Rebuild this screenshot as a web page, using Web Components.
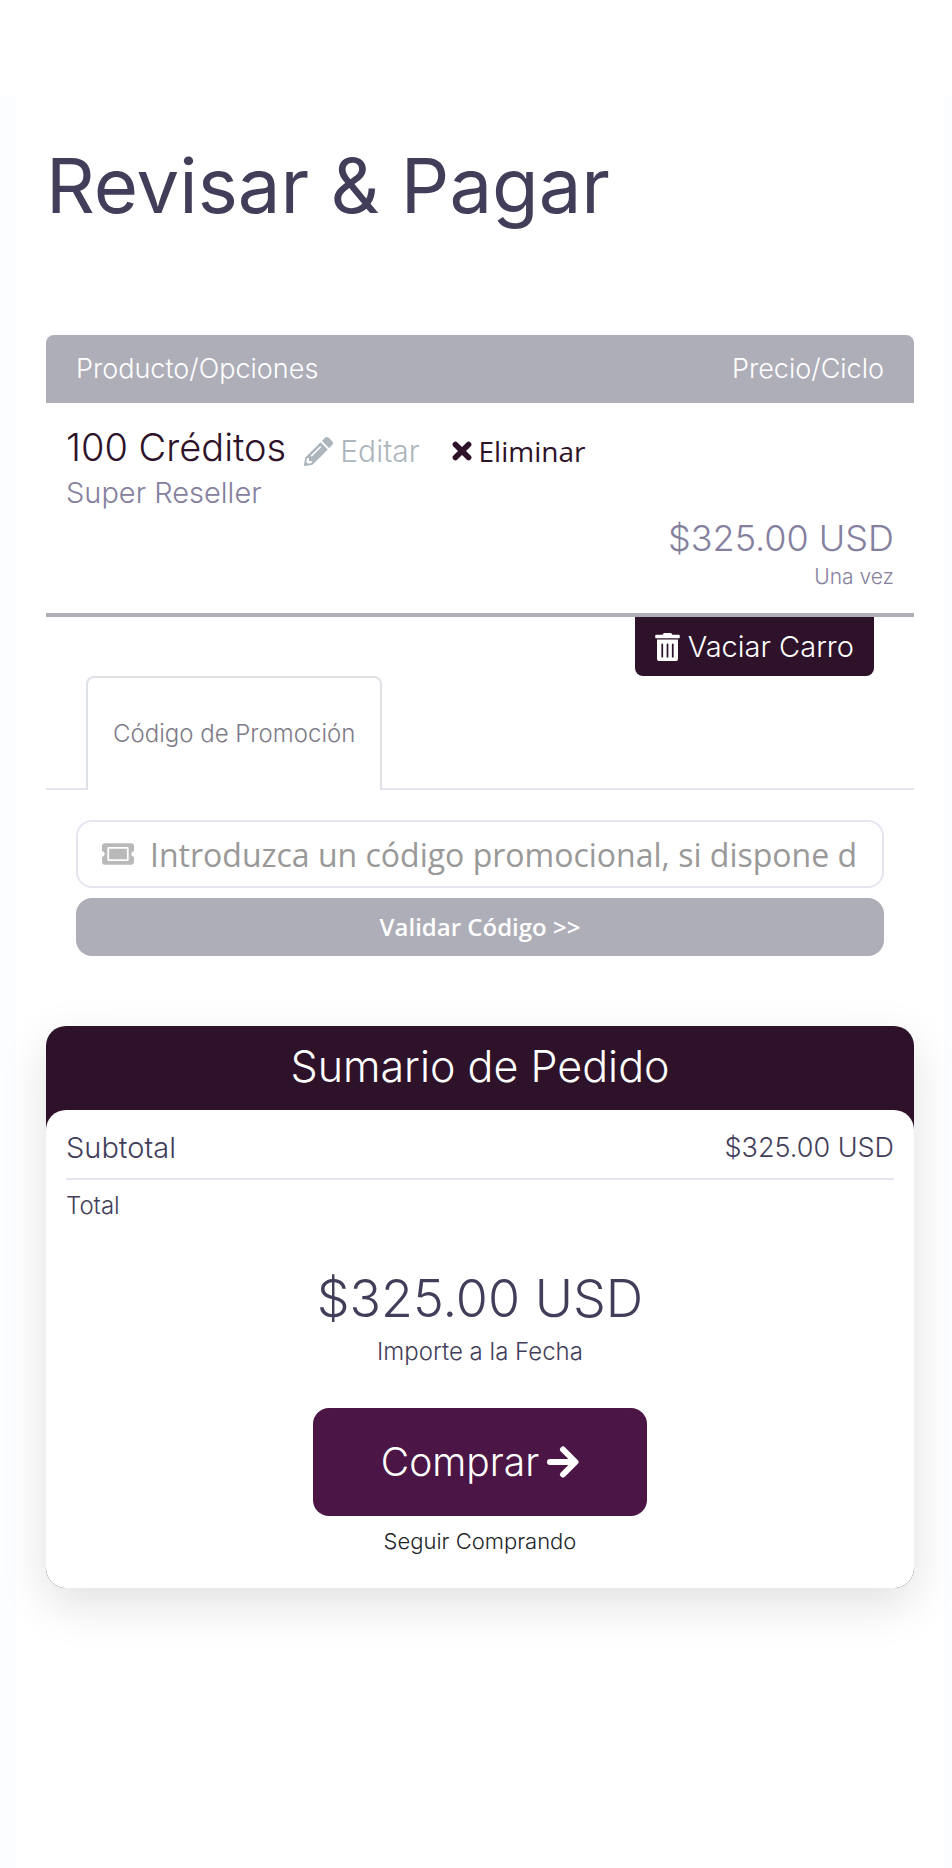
<!DOCTYPE html>
<html lang="es">
<head>
<meta charset="utf-8">
<meta name="viewport" content="width=device-width, initial-scale=1">
<title>Revisar &amp; Pagar</title>
<style>
  :root {
    --ink: #423e5a;
    --muted: #85809e;
    --bar: #aeaeb8;
    --plum: #2d1229;
    --plum-bright: #4b1645;
    --rule: #e6e5f1;
    --alt-font: "Open Sans", "Noto Sans", sans-serif;
  }
  body {
    margin: 0;
    background: #fff;
    color: var(--ink);
    font: 300 24px/30px Inter, "Noto Sans", sans-serif;
  }
</style>
</head>
<body>
<checkout-page>
  <span slot="title">Revisar &amp; Pagar</span>
  <cart-table></cart-table>
  <promo-box></promo-box>
  <order-summary>
    <span slot="title">Sumario de Pedido</span>
    <span slot="subtotal">$325.00 USD</span>
    <span slot="total">$325.00 USD</span>
  </order-summary>
</checkout-page>

<script>
const define = (name, html) => {
  const template = document.createElement('template');
  template.innerHTML = html;
  customElements.define(name, class extends HTMLElement {
    constructor() {
      super();
      this.attachShadow({ mode: 'open' }).append(template.content.cloneNode(true));
    }
  });
};

const ICONS = {
  pencil: ['0 0 512 512', '<path fill="currentColor" d="M497.9 142.1l-46.1 46.1c-4.7 4.7-12.3 4.7-17 0l-111-111c-4.7-4.7-4.7-12.3 0-17l46.1-46.1c18.7-18.7 49.1-18.7 67.9 0l60.1 60.1c18.8 18.7 18.8 49.1 0 67.9zM284.2 99.8L21.6 362.4.4 483.9c-2.9 16.4 11.4 30.6 27.8 27.8l121.5-21.3 262.6-262.6c4.7-4.7 4.7-12.3 0-17l-111-111c-4.8-4.7-12.4-4.7-17.1 0zM124.1 339.9c-5.5-5.5-5.5-14.3 0-19.8l154-154c5.5-5.5 14.3-5.5 19.8 0s5.5 14.3 0 19.8l-154 154c-5.5 5.5-14.3 5.5-19.8 0zM88 424h48v36.3l-64.5 11.3-31.1-31.1L51.7 376H88v48z"/>'],
  cross: ['0 0 20 20', '<path fill="none" stroke="currentColor" stroke-width="5.6" stroke-linecap="round" d="M3.4 3.4l13.2 13.2M16.6 3.4L3.4 16.6"/>'],
  trash: ['0 0 448 512', '<path fill="currentColor" d="M32 464a48 48 0 0 0 48 48h288a48 48 0 0 0 48-48V118H32zm272-256a16 16 0 0 1 32 0v224a16 16 0 0 1-32 0zm-96 0a16 16 0 0 1 32 0v224a16 16 0 0 1-32 0zm-96 0a16 16 0 0 1 32 0v224a16 16 0 0 1-32 0zM432 32H312l-9.4-18.7A24 24 0 0 0 281.1 0H166.8a23.72 23.72 0 0 0-21.4 13.3L136 32H16A16 16 0 0 0 0 48v32a16 16 0 0 0 16 16h416a16 16 0 0 0 16-16V48a16 16 0 0 0-16-16z"/>'],
  ticket: ['0 64 576 384', '<path fill="currentColor" d="M128 160h320v192H128V160zm400 96c0 26.51 21.49 48 48 48v96c0 26.51-21.49 48-48 48H48c-26.51 0-48-21.49-48-48v-96c26.51 0 48-21.49 48-48s-21.49-48-48-48v-96c0-26.51 21.49-48 48-48h480c26.51 0 48 21.49 48 48v96c-26.51 0-48 21.49-48 48zm-48-104c0-13.255-10.745-24-24-24H120c-13.255 0-24 10.745-24 24v208c0 13.255 10.745 24 24 24h336c13.255 0 24-10.745 24-24V152z"/>'],
  arrow: ['0 0 32 32', '<path fill="none" stroke="currentColor" stroke-width="6" stroke-linecap="round" stroke-linejoin="round" d="M3 16h25M16 3.5L28.5 16L16 28.5"/>']
};

customElements.define('ui-icon', class extends HTMLElement {
  connectedCallback() {
    if (this.shadowRoot) return;
    const [box, shape] = ICONS[this.getAttribute('name')];
    this.attachShadow({ mode: 'open' }).innerHTML = `
      <style>
        :host { display: inline-block; flex: none; }
        svg { display: block; width: 100%; height: 100%; }
      </style>
      <svg viewBox="${box}" aria-hidden="true">${shape}</svg>`;
  }
});

define('checkout-page', `
  <style>
    :host { display: block; padding-top: 96px; }
    .band { background: #fbfdff; padding: 0 8px 0 16px; }
    main {
      box-sizing: border-box;
      min-height: calc(100vh - 96px);
      padding: 44px 30px 60px;
      background: #fff;
    }
    h1 { margin: 0 0 105px; font-size: 76px; line-height: 90px; font-weight: 400; }
  </style>
  <div class="band"><main>
    <h1><slot name="title"></slot></h1>
    <slot></slot>
  </main></div>`);

define('cart-table', `
  <style>
    :host { display: flex; flex-direction: column; }
    table { width: 100%; border-collapse: separate; border-spacing: 0; }
    th {
      padding: 16px 30px;
      background: var(--bar);
      color: #fff;
      font-size: 27px;
      line-height: 36px;
      font-weight: 300;
      text-align: left;
    }
    th:first-child { border-top-left-radius: 8px; }
    th:last-child { border-top-right-radius: 8px; text-align: right; }
    td { padding: 20px; border-bottom: 4px solid var(--bar); height: 170px; vertical-align: top; }
    td:last-child { padding-left: 0; text-align: right; vertical-align: bottom; color: var(--muted); }
    .line { display: flex; align-items: flex-end; white-space: nowrap; }
    .name { margin-right: 18px; color: var(--plum); font-size: 38px; line-height: 48px; }
    .group { color: var(--muted); font-size: 29px; line-height: 44px; }
    a, button { font: inherit; color: inherit; text-decoration: none; border: 0; cursor: pointer; }
    a { display: flex; align-items: center; gap: 7px; margin-right: 32px; color: #adb5bd; font-size: 30px; line-height: 40px; }
    a ui-icon { width: 29px; height: 29px; }
    button { display: flex; align-items: center; padding: 0; background: none; color: var(--plum); }
    .remove { gap: 7px; font: 400 28px/40px var(--alt-font); }
    .remove ui-icon { width: 20px; height: 20px; }
    .price { font-size: 36px; line-height: 46px; white-space: nowrap; }
    .cycle { font-size: 21px; line-height: 32px; }
    .empty {
      align-self: flex-end;
      gap: 8px;
      margin-right: 40px;
      padding: 0 20px;
      background: var(--plum);
      color: #fff;
      border-radius: 0 0 8px 8px;
      font-size: 29px;
      line-height: 59px;
    }
    .empty ui-icon { width: 25px; height: 28px; }
  </style>
  <table>
    <thead><tr><th scope="col">Producto/Opciones</th><th scope="col">Precio/Ciclo</th></tr></thead>
    <tbody><tr>
      <td>
        <div class="line">
          <span class="name">100 Créditos</span>
          <a href="#editar"><ui-icon name="pencil"></ui-icon>Editar</a>
          <button class="remove" type="button"><ui-icon name="cross"></ui-icon>Eliminar</button>
        </div>
        <div class="group">Super Reseller</div>
      </td>
      <td>
        <div class="price">$325.00 USD</div>
        <div class="cycle">Una vez</div>
      </td>
    </tr></tbody>
  </table>
  <button class="empty" type="button"><ui-icon name="trash"></ui-icon>Vaciar Carro</button>`);

define('promo-box', `
  <style>
    :host { display: block; margin-bottom: 70px; }
    nav { display: flex; padding: 0 40px; border-bottom: 2px solid var(--rule); }
    nav a {
      margin-bottom: -2px;
      padding: 41px 25px;
      border: 2px solid #dee2e6;
      border-bottom: 0;
      border-radius: 8px 8px 0 0;
      background: #fff;
      color: #7d7b87;
      line-height: 30px;
      text-decoration: none;
    }
    form { display: flex; flex-direction: column; gap: 10px; padding: 30px 30px 0; }
    label {
      display: flex;
      align-items: center;
      gap: 16px;
      padding: 0 24px;
      border: 2px solid var(--rule);
      border-radius: 16px;
      color: #b9b9b9;
    }
    label ui-icon { width: 32px; height: 22px; }
    input {
      flex: 1;
      min-width: 0;
      height: 64px;
      padding: 0;
      border: 0;
      outline: 0;
      background: none;
      color: var(--ink);
      font: 400 32px/44px var(--alt-font);
    }
    input::placeholder { color: #999; opacity: 1; }
    button {
      padding: 12px 24px;
      border: 0;
      border-radius: 16px;
      background: var(--bar);
      color: #fff;
      font: 600 24px/34px var(--alt-font);
      cursor: pointer;
    }
  </style>
  <nav><a href="#promocion">Código de Promoción</a></nav>
  <form id="promocion">
    <label for="code"><ui-icon name="ticket"></ui-icon>
      <input id="code" type="text" aria-label="Código de Promoción" placeholder="Introduzca un código promocional, si dispone d"></label>
    <button type="button">Validar Código &gt;&gt;</button>
  </form>`);

define('order-summary', `
  <style>
    :host {
      display: block;
      border-radius: 20px;
      background: var(--plum);
      box-shadow: 0 16px 48px rgba(0, 0, 0, .12);
    }
    h2 {
      margin: 0;
      padding: 14px 20px 18px;
      color: #fff;
      font-size: 43px;
      line-height: 52px;
      font-weight: 300;
      text-align: center;
    }
    .body {
      display: flex;
      flex-direction: column;
      padding: 0 20px 32px;
      border-radius: 20px;
      background: #fff;
    }
    .subtotal {
      display: flex;
      justify-content: space-between;
      padding: 20px 0 12px;
      border-bottom: 2px solid var(--rule);
      font-size: 27px;
      line-height: 36px;
    }
    .subtotal .label { font-size: 29px; }
    .total { display: flex; flex-direction: column; align-items: center; padding-top: 11px; }
    .total .label { align-self: flex-start; }
    .amount { margin: 46px 0 6px; font-size: 52px; line-height: 64px; }
    button {
      display: flex;
      align-items: center;
      align-self: center;
      gap: 8px;
      margin: 41px 0 10px;
      padding: 30px 68px;
      border: 0;
      border-radius: 16px;
      background: var(--plum-bright);
      color: #fff;
      font: inherit;
      font-size: 39px;
      line-height: 48px;
      cursor: pointer;
    }
    button ui-icon { width: 32px; height: 32px; }
    .more { align-self: center; color: #212529; font-size: 22px; text-decoration: none; }
  </style>
  <h2><slot name="title"></slot></h2>
  <div class="body">
    <div class="subtotal"><span class="label">Subtotal</span><slot name="subtotal"></slot></div>
    <div class="total">
      <span class="label">Total</span>
      <div class="amount"><slot name="total"></slot></div>
      <span>Importe a la Fecha</span>
    </div>
    <button type="button">Comprar<ui-icon name="arrow"></ui-icon></button>
    <a class="more" href="#tienda">Seguir Comprando</a>
  </div>`);
</script>
</body>
</html>
